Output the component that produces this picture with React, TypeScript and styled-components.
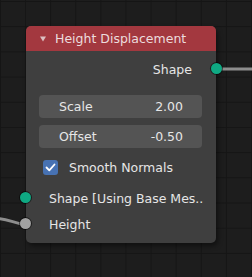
import React from "react";
import styled, { createGlobalStyle } from "styled-components";

const Global = createGlobalStyle`
  html, body { margin: 0; padding: 0; }
  body {
    width: 252px;
    height: 277px;
    overflow: hidden;
    background-color: #1d1d1d;
    font-family: "DejaVu Sans", "Liberation Sans", sans-serif;
  }
`;

const Canvas = styled.div`
  position: relative;
  width: 252px;
  height: 277px;
  overflow: hidden;
  background-color: #1d1d1d;
  background-image:
    linear-gradient(to right, #151515 1px, transparent 1px),
    linear-gradient(to bottom, #151515 1px, transparent 1px);
  background-size: 25.1px 25.2px;
  background-position: 0px 1px;
`;

const Wires = styled.svg`
  position: absolute;
  left: 0;
  top: 0;
  width: 252px;
  height: 277px;
`;

const Node = styled.div`
  position: absolute;
  left: 26px;
  top: 26px;
  width: 190px;
  border-radius: 5px;
  background: #3f3f3f;
  box-shadow: 2px 3px 5px rgba(0, 0, 0, 0.45);
  color: #e6e6e6;
  font-size: 12.5px;
`;

const Header = styled.div`
  height: 25px;
  display: flex;
  align-items: center;
  gap: 9px;
  padding-left: 14px;
  background: #a3383f;
  border-radius: 5px 5px 0 0;
  color: #ecdcdd;
`;

const Collapse = styled.svg`
  width: 6px;
  height: 6px;
  flex: none;
`;

const Body = styled.div`
  display: flex;
  flex-direction: column;
  padding: 7px 0 8px;
`;

const OutputRow = styled.div`
  position: relative;
  height: 22px;
  display: flex;
  align-items: center;
  justify-content: flex-end;
  padding-right: 24px;
`;

const Fields = styled.div`
  display: flex;
  flex-direction: column;
  gap: 7px;
  margin: 15px 14px 0 13px;
`;

const Field = styled.div`
  height: 23px;
  border-radius: 4px;
  background: #545454;
  display: flex;
  align-items: center;
  justify-content: space-between;
  padding: 0 19px 0 20px;
`;

const CheckRow = styled.div`
  height: 22px;
  margin-top: 8px;
  display: flex;
  align-items: center;
  gap: 11px;
  padding-left: 17px;
`;

const Check = styled.div`
  width: 15px;
  height: 15px;
  border-radius: 3px;
  background: #4772b3;
  display: flex;
  align-items: center;
  justify-content: center;
`;

const InputRow = styled.div<{ $first?: boolean }>`
  position: relative;
  height: 22px;
  margin-top: ${(p) => (p.$first ? "9px" : "4px")};
  display: flex;
  align-items: center;
  padding-left: 23px;
  white-space: nowrap;
`;

const Socket = styled.span<{ $color: string; $side: "left" | "right" }>`
  position: absolute;
  top: 50%;
  ${(p) => (p.$side === "left" ? "left: -6px;" : "right: -6px;")}
  width: 11px;
  height: 11px;
  margin-top: -6px;
  border-radius: 50%;
  background: ${(p) => p.$color};
  box-shadow: 0 0 0 1px rgba(0, 0, 0, 0.55);
`;

export default function App() {
  return (
    <>
      <Global />
      <Canvas>
        <Wires viewBox="0 0 252 277">
          <path d="M216 69 L252 69" stroke="#8d8d8d" strokeWidth="3" fill="none" />
          <path d="M-2 218.5 C 10 219, 14 224, 25 224" stroke="#8d8d8d" strokeWidth="3" fill="none" />
        </Wires>
        <Node>
          <Header>
            <Collapse viewBox="0 0 6 6">
              <path d="M0 0.5 L6 0.5 L3 5.5 Z" fill="#dcc0c2" />
            </Collapse>
            <span>Height Displacement</span>
          </Header>
          <Body>
            <OutputRow>
              Shape
              <Socket $color="#0fa983" $side="right" />
            </OutputRow>
            <Fields>
              <Field>
                <span>Scale</span>
                <span>2.00</span>
              </Field>
              <Field>
                <span>Offset</span>
                <span>-0.50</span>
              </Field>
            </Fields>
            <CheckRow>
              <Check>
                <svg width="11" height="11" viewBox="0 0 11 11">
                  <path d="M1.5 5.5 L4.3 8.3 L9.5 2.5" stroke="#fff" strokeWidth="1.8" fill="none" strokeLinecap="round" strokeLinejoin="round" />
                </svg>
              </Check>
              <span>Smooth Normals</span>
            </CheckRow>
            <InputRow $first>
              <Socket $color="#0fa983" $side="left" />
              Shape [Using Base Mes..
            </InputRow>
            <InputRow>
              <Socket $color="#a1a1a1" $side="left" />
              Height
            </InputRow>
          </Body>
        </Node>
      </Canvas>
    </>
  );
}
